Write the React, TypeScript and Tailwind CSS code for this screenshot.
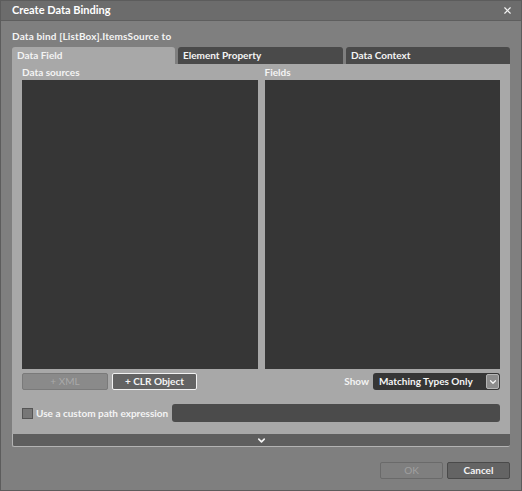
import { ChevronDown, X } from "lucide-react";

const font = { fontFamily: 'Lato, "Noto Sans", sans-serif' };

export default function App() {
  return (
    <div
      className="w-[522px] h-[491px] bg-[#7f7f7f] border border-[#5c5c5c] flex flex-col text-[10px] font-bold text-[#f4f4f4] whitespace-nowrap"
      style={font}
    >
      {/* Title bar */}
      <div className="h-[20px] bg-[#6c6c6c] border-b border-[#5e5e5e] flex items-center justify-between pl-[11px] pr-[8px]">
        <span className="text-[11px] text-white">Create Data Binding</span>
        <X className="w-[11px] h-[11px]" strokeWidth={2.5} />
      </div>

      <div className="flex-1 flex flex-col px-[11px]">
        <div className="pt-[8px] h-[26px] leading-[14px] tracking-[0.15px]">Data bind [ListBox].ItemsSource to</div>

        {/* Tabs */}
        <div className="flex gap-[3px] h-[17px]">
          <div className="w-[163px] bg-[#a8a8a8] rounded-t-[3px] pl-[5px] leading-[17px]">Data Field</div>
          <div className="w-[165px] bg-[#4a4a4a] rounded-t-[3px] pl-[5px] leading-[17px]">Element Property</div>
          <div className="flex-1 bg-[#4a4a4a] rounded-t-[3px] pl-[5px] leading-[17px]">Data Context</div>
        </div>

        {/* Panel */}
        <div className="bg-[#a8a8a8] px-[10px] flex flex-col h-[370px]">
          <div className="flex gap-[7px] flex-1 pb-[4px]">
            <div className="flex-1 flex flex-col">
              <div className="h-[16px] leading-[16px]">Data sources</div>
              <div className="flex-1 bg-[#363636]" />
            </div>
            <div className="flex-1 flex flex-col">
              <div className="h-[16px] leading-[16px]">Fields</div>
              <div className="flex-1 bg-[#363636]" />
            </div>
          </div>

          <div className="flex items-center h-[17px]">
            <div className="w-[86px] h-[17px] rounded-[2px] bg-[#8a8a8a] border border-[#7a7a7a] text-[#a9a9a9] font-normal flex items-center justify-center">
              + XML
            </div>
            <div className="ml-[4px] w-[85px] h-[17px] rounded-[2px] bg-[#636363] border border-[#f2f2f2] flex items-center justify-center">
              + CLR Object
            </div>
            <div className="flex-1" />
            <span className="mr-[4px]">Show</span>
            <div className="w-[127px] h-[17px] rounded-[3px] bg-[#363636] flex items-center justify-between pl-[6px] pr-[1px]">
              <span>Matching Types Only</span>
              <div className="w-[13px] h-[15px] rounded-[2px] bg-[#8d8d8d] border border-[#b5b5b5] flex items-center justify-center">
                <ChevronDown className="w-[10px] h-[10px]" strokeWidth={3} />
              </div>
            </div>
          </div>

          <div className="flex items-center mt-[14px] h-[18px]">
            <div className="w-[11px] h-[11px] bg-[#777777] border border-[#555555]" />
            <span className="ml-[3px]">Use a custom path expression</span>
            <div className="ml-[4px] flex-1 h-[18px] rounded-[3px] bg-[#4b4b4b]" />
          </div>
          <div className="h-[12px]" />
        </div>

        {/* Expander */}
        <div className="h-[13px] bg-[#5e5e5e] border-b border-[#b3b3b3] border-l border-l-[#b3b3b3] rounded-b-[2px] flex items-center justify-center">
          <ChevronDown className="w-[11px] h-[11px]" strokeWidth={3.5} />
        </div>

        <div className="flex justify-end gap-[4px] mt-[15px]">
          <div className="w-[63px] h-[17px] rounded-[2px] border border-[#6a6a6a] bg-[#7f7f7f] text-[#a0a0a0] font-normal flex items-center justify-center">
            OK
          </div>
          <div className="w-[63px] h-[17px] rounded-[2px] border border-[#4a4a4a] bg-[#646464] flex items-center justify-center">
            Cancel
          </div>
        </div>
      </div>
    </div>
  );
}
